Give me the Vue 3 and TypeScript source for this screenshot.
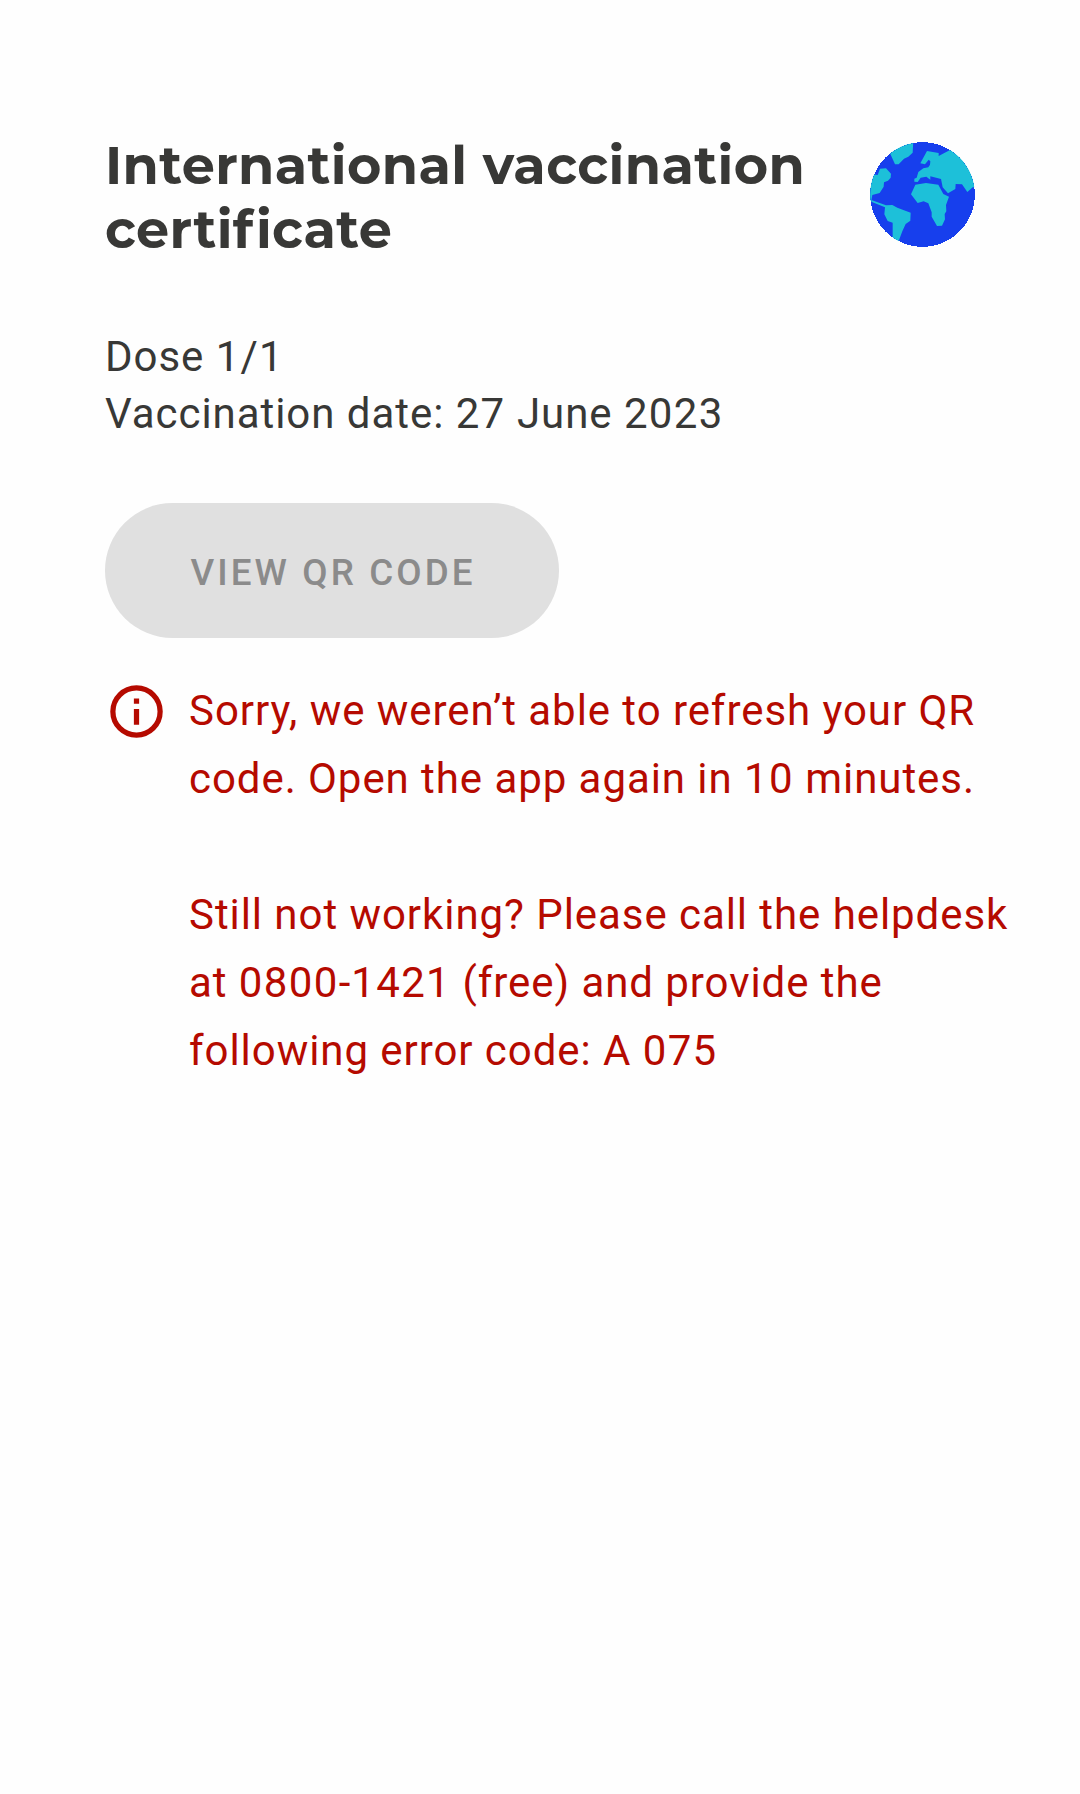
<script setup lang="ts">
interface Certificate {
  titleLines: string[]
  details: string[]
}

interface Run {
  text: string
  special: boolean
}

const certificate: Certificate = {
  titleLines: ['International vaccination', 'certificate'],
  details: ['Dose 1/1', 'Vaccination date: 27 June 2023'],
}

const errorParagraphs: string[][] = [
  ['Sorry, we weren’t able to refresh your QR', 'code. Open the app again in 10 minutes.'],
  ['Still not working? Please call the helpdesk', 'at 0800-1421 (free) and provide the', 'following error code: A 075'],
]

const DIGITS = /(\d+)/
const F_GLYPH = /(f)/

// Splits a line so that matching characters can carry their own tracking.
function toRuns(line: string, pattern: RegExp): Run[] {
  return line
    .split(pattern)
    .filter((text) => text.length > 0)
    .map((text) => ({ text, special: pattern.test(text) }))
}
</script>

<template>
  <main class="card">
    <header class="header">
      <h1 class="title">
        <span v-for="line in certificate.titleLines" :key="line" class="line"><span v-for="(run, i) in toRuns(line, F_GLYPH)" :key="i" :class="{ loose: run.special }">{{ run.text }}</span></span>
      </h1>
      <svg class="globe" viewBox="30 30 315 315" aria-hidden="true">
        <defs>
          <clipPath id="globe-clip"><circle cx="187.5" cy="187.5" r="157" /></clipPath>
        </defs>
        <circle cx="187.5" cy="187.5" r="157" fill="#173fed" shape-rendering="crispEdges" />
        <g clip-path="url(#globe-clip)" fill="#1dc0d9">
          <path d="M90 64 L120 25 L160 25 L158 62 L145 74 L132 80 L116 97 L105 97 Z" />
          <path d="M25 125 L53 129 L60 110 L78 109 L93 125 L92 137 L84 146 L72 151 L71 164 L59 183 L37 189 L34 206 L20 206 Z" />
          <path d="M34 204 L78 220 L97 219 L112 227 L152 242 L151 266 L137 276 L127 298 L116 327 L98 322 L98 272 L83 267 L73 247 L75 226 L34 209 Z" />
          <path d="M166 158 L153 187 L173 213 L191 208 L205 214 L215 241 L215 254 L231 282 L246 281 L255 262 L254 246 L259 238 L258 219 L267 194 L250 186 L235 158 L198 153 Z" />
          <path d="M181 94 L201 57 L236 63 L236 72 L270 54 L330 50 L355 166 L338 166 L322 180 L306 157 L287 156 L286 171 L264 184 L248 166 L243 141 L211 133 L211 143 L199 134 L182 137 L173 150 L163 149 L163 140 L170 137 L175 120 L190 109 L205 106 L210 98 L211 88 L206 83 L195 97 Z" />
        </g>
      </svg>
    </header>

    <p class="details">
      <span v-for="line in certificate.details" :key="line" class="line"><span v-for="(run, i) in toRuns(line, DIGITS)" :key="i" :class="{ digits: run.special }">{{ run.text }}</span></span>
    </p>

    <button class="qr-button" type="button" disabled>VIEW QR CODE</button>

    <section class="error" role="alert">
      <svg class="info" viewBox="0 0 24 24" aria-hidden="true">
        <circle cx="12" cy="12" r="9" fill="none" stroke="currentColor" stroke-width="2" />
        <path d="M11 7h2v2h-2zM11 11h2v6h-2z" fill="currentColor" />
      </svg>
      <div class="error-text">
        <p v-for="(paragraph, index) in errorParagraphs" :key="index">
          <span v-for="line in paragraph" :key="line" class="line"><span v-for="(run, i) in toRuns(line, DIGITS)" :key="i" :class="{ digits: run.special }">{{ run.text }}</span></span>
        </p>
      </div>
    </section>
  </main>
</template>

<style>
body {
  margin: 0;
  background: #fefefe;
}
</style>

<style scoped>
.card {
  box-sizing: border-box;
  min-height: 1794px;
  padding: 133px 60px 0 105px;
  color: #383836;
  background: #fefefe;
  font-family: Roboto, sans-serif;
}

.line {
  display: block;
  white-space: pre;
}

.digits {
  letter-spacing: 1.35px;
}

.header {
  display: flex;
  justify-content: space-between;
  align-items: flex-start;
  width: 870px;
}

.title {
  margin: 0;
  font: 700 52.5px/64px Montserrat, Inter, sans-serif;
  letter-spacing: 0.4px;
}

.loose {
  letter-spacing: 2.7px;
}

.globe {
  width: 105px;
  height: 105px;
  margin-top: 9px;
}

.details {
  margin: 67px 0 0;
  font-size: 42px;
  line-height: 57px;
  letter-spacing: 0.95px;
}

.qr-button {
  display: block;
  width: 454px;
  height: 135px;
  margin-top: 61px;
  padding: 5px 0 0 2px;
  border: 0;
  border-radius: 67.5px;
  background: #e0e0e0;
  color: #8b8b8b;
  font: 500 36.75px/1 Roboto, sans-serif;
  letter-spacing: 3.1px;
}

.error {
  display: flex;
  align-items: flex-start;
  gap: 21px;
  margin-top: 39px;
  color: #b50a00;
}

.info {
  flex: none;
  width: 63px;
  height: 63px;
  margin-top: 3px;
}

.error-text {
  font-size: 42px;
  line-height: 68px;
  letter-spacing: 0.94px;
}

.error-text p {
  margin: 0;
}

.error-text p + p {
  margin-top: 68px;
}
</style>
